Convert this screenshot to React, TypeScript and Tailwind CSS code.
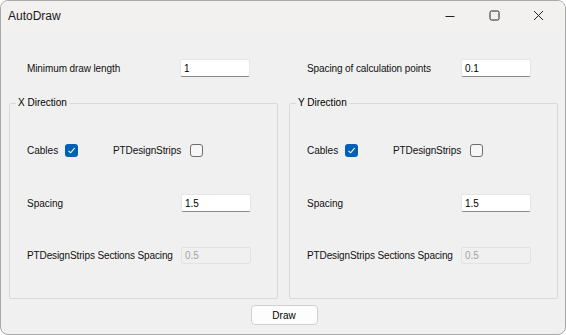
import React from "react";

const font = { fontFamily: '"Liberation Sans", Arial, sans-serif' };

function TextBox({ value, disabled }: { value: string; disabled?: boolean }) {
  return disabled ? (
    <div className="w-[70px] h-[17px] border border-[#e2e2e2] bg-[#f0f0f0] rounded-[2px] flex items-center pl-[3px] text-[10px] text-[#a3a3a3]">
      {value}
    </div>
  ) : (
    <div className="w-[70px] h-[18px] border border-[#e6e6e6] border-b-[#8a8a8a] bg-white rounded-[2px] flex items-center pl-[3px] text-[10px] text-black">
      {value}
    </div>
  );
}

function CheckBox({ checked }: { checked?: boolean }) {
  return checked ? (
    <div className="w-[13px] h-[13px] rounded-[3px] bg-[#005fb8] flex items-center justify-center">
      <svg width="9" height="9" viewBox="0 0 9 9">
        <path d="M1.5 4.8 L3.6 6.8 L7.6 2.2" fill="none" stroke="white" strokeWidth="1.1" />
      </svg>
    </div>
  ) : (
    <div className="w-[13px] h-[13px] rounded-[3px] border border-[#6e6e6e] bg-[#f7f7f7]" />
  );
}

function Group({ title }: { title: string }) {
  return (
    <div className="relative w-[269px] h-[196px] border border-[#d9d9d9] rounded-[2px]">
      <div className="absolute left-[6px] top-[-7px] px-[2px] bg-[#f0f0f0] text-[10px] leading-[12px] text-black">
        {title}
      </div>
      <div className="flex flex-col pl-[17px]">
        <div className="flex items-center mt-[40px] h-[13px]">
          <div className="w-[38px] text-[10px]">Cables</div>
          <CheckBox checked />
          <div className="w-[35px]" />
          <div className="w-[77px] text-[10px] tracking-[-0.1px]">PTDesignStrips</div>
          <CheckBox />
        </div>
        <div className="flex items-center mt-[37px]">
          <div className="w-[154px] text-[10px]">Spacing</div>
          <TextBox value="1.5" />
        </div>
        <div className="flex items-center mt-[35px]">
          <div className="w-[154px] text-[10px] tracking-[-0.12px] whitespace-nowrap">PTDesignStrips Sections Spacing</div>
          <TextBox value="0.5" disabled />
        </div>
      </div>
    </div>
  );
}

export default function App() {
  return (
    <div style={font} className="w-[566px] h-[335px] border border-[#a9a9a9] rounded-[8px] overflow-hidden bg-[#f0f0f0] flex flex-col text-[#111]">
      <div className="h-[29px] bg-[#f3f0f0] flex items-center">
        <div className="pl-[7px] text-[12px] text-[#1a1a1a] flex-1">AutoDraw</div>
        <div className="flex items-center h-full">
          <div className="w-[44px] h-full flex items-center justify-center">
            <svg width="10" height="10" viewBox="0 0 10 10">
              <path d="M0.5 5.5 H9.5" stroke="#222" strokeWidth="1" />
            </svg>
          </div>
          <div className="w-[44px] h-full flex items-center justify-center">
            <svg width="11" height="11" viewBox="0 0 11 11">
              <rect x="1" y="1" width="9" height="9" rx="1.5" fill="none" stroke="#222" strokeWidth="1" />
            </svg>
          </div>
          <div className="w-[44px] h-full flex items-center justify-center mr-[5px]">
            <svg width="11" height="11" viewBox="0 0 11 11">
              <path d="M1 1 L10 10 M10 1 L1 10" stroke="#222" strokeWidth="1" />
            </svg>
          </div>
        </div>
      </div>
      <div className="flex flex-col pl-[8px]">
        <div className="flex mt-[29px] gap-[11px]">
          <div className="w-[269px] flex items-center">
            <div className="w-[171px] pl-[18px] text-[10px] tracking-[-0.1px]">Minimum draw length</div>
            <TextBox value="1" />
          </div>
          <div className="w-[269px] flex items-center">
            <div className="w-[172px] pl-[18px] text-[10px] tracking-[-0.1px]">Spacing of calculation points</div>
            <TextBox value="0.1" />
          </div>
        </div>
        <div className="flex mt-[26px] gap-[11px]">
          <Group title="X Direction" />
          <Group title="Y Direction" />
        </div>
        <div className="flex justify-center mt-[6px] pr-[6px]">
          <div className="w-[67px] h-[20px] bg-[#fdfdfd] border border-[#d0d0d0] rounded-[4px] flex items-center justify-center text-[10px] text-black">
            Draw
          </div>
        </div>
      </div>
    </div>
  );
}
